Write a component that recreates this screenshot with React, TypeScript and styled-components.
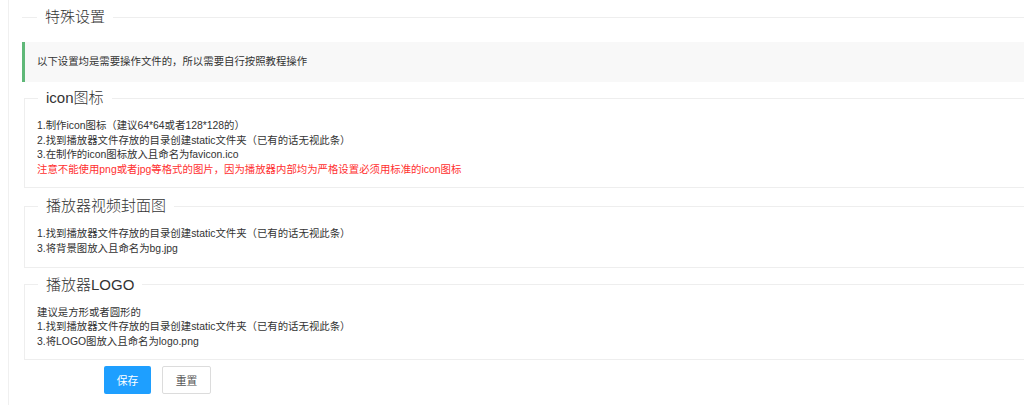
import { FC } from "react";
import styled, { createGlobalStyle } from "styled-components";

const GlobalStyle = createGlobalStyle`
  html, body {
    margin: 0;
    padding: 0;
    background: #fff;
    overflow: hidden;
  }
  body {
    font-family: "Liberation Sans", "Noto Sans CJK SC", sans-serif;
    color: #333;
  }
`;

const Page = styled.div`
  margin-left: 8px;
  border-left: 1px solid #f0f0f0;
  padding: 7px 0 20px 13px;
  width: 1100px;
  min-height: 405px;
  box-sizing: border-box;
`;

const TitleField = styled.fieldset`
  margin: 0;
  padding: 0;
  border: none;
  border-top: 1px solid #eee;
  min-width: 0;
`;

const Legend = styled.legend<{ $offset: number }>`
  margin-left: ${(p) => p.$offset}px;
  padding: 0 8px;
  font-size: 15px;
  line-height: 20px;
  font-weight: 300;
  color: #333;
`;

const Quote = styled.div`
  margin-top: 15px;
  height: 40px;
  line-height: 40px;
  padding-left: 12px;
  border-left: 3px solid #5fb878;
  background: #f8f8f8;
  font-size: 10.4px;
  color: #333;
`;

const Field = styled.fieldset`
  margin: ${(p: { $top: number }) => p.$top}px 0 0 2px;
  padding: 11px 10px 10px 12px;
  border: 1px solid #eee;
  min-width: 0;
`;

const Lines = styled.div`
  font-size: 10.4px;
  line-height: 14.6px;
  color: #333;
`;

const Line = styled.div<{ $warn?: boolean }>`
  color: ${(p) => (p.$warn ? "#ff3030" : "#333")};
  white-space: nowrap;
`;

const ButtonRow = styled.div`
  display: flex;
  gap: 11px;
  margin-top: 6px;
  padding-left: 82px;
`;

const Button = styled.button<{ $primary?: boolean }>`
  width: ${(p) => (p.$primary ? 47 : 49)}px;
  height: 28px;
  padding: 0;
  border-radius: 2px;
  border: 1px solid ${(p) => (p.$primary ? "transparent" : "#dcdcdc")};
  background: ${(p) => (p.$primary ? "#1e9fff" : "#fff")};
  color: ${(p) => (p.$primary ? "#fff" : "#555")};
  font-family: "Liberation Sans", "Noto Sans CJK SC", sans-serif;
  font-size: 10.8px;
  cursor: pointer;
`;

const sections = [
  {
    title: "icon图标",
    top: 6,
    lines: [
      "1.制作icon图标（建议64*64或者128*128的）",
      "2.找到播放器文件存放的目录创建static文件夹（已有的话无视此条）",
      "3.在制作的icon图标放入且命名为favicon.ico",
    ],
    warn: "注意不能使用png或者jpg等格式的图片，因为播放器内部均为严格设置必须用标准的icon图标",
  },
  {
    title: "播放器视频封面图",
    top: 8,
    lines: [
      "1.找到播放器文件存放的目录创建static文件夹（已有的话无视此条）",
      "3.将背景图放入且命名为bg.jpg",
    ],
  },
  {
    title: "播放器LOGO",
    top: 7,
    lines: [
      "建议是方形或者圆形的",
      "1.找到播放器文件存放的目录创建static文件夹（已有的话无视此条）",
      "3.将LOGO图放入且命名为logo.png",
    ],
  },
];

const App: FC = () => {
  return (
    <>
      <GlobalStyle />
      <Page>
        <TitleField>
          <Legend $offset={15}>特殊设置</Legend>
        </TitleField>

        <Quote>以下设置均是需要操作文件的，所以需要自行按照教程操作</Quote>

        {sections.map((s) => (
          <Field key={s.title} $top={s.top}>
            <Legend $offset={1}>{s.title}</Legend>
            <Lines>
              {s.lines.map((l) => (
                <Line key={l}>{l}</Line>
              ))}
              {s.warn && <Line $warn>{s.warn}</Line>}
            </Lines>
          </Field>
        ))}

        <ButtonRow>
          <Button $primary>保存</Button>
          <Button>重置</Button>
        </ButtonRow>
      </Page>
    </>
  );
};

export default App;
